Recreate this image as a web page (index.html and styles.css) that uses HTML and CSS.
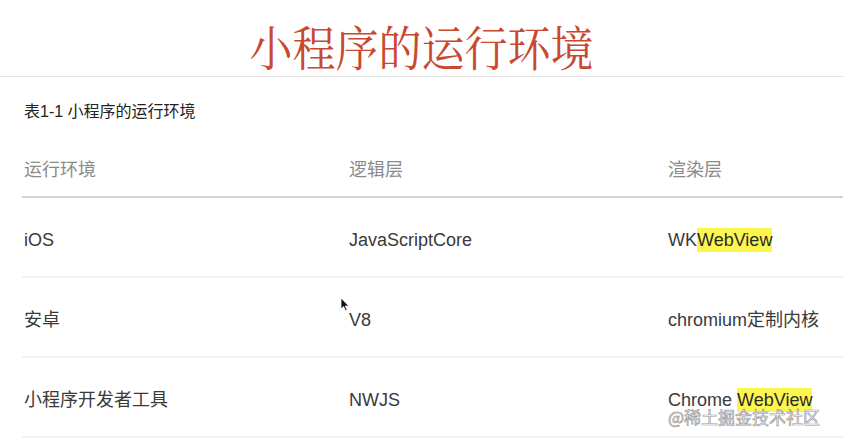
FILE: index.html
```html
<!DOCTYPE html>
<html lang="zh-CN">
<head>
  <meta charset="UTF-8">
  <title>小程序的运行环境</title>
  <link rel="stylesheet" href="styles.css">
</head>
<body>

  <!-- Slide title -->
  <header class="slide-title">
    <h1>小程序的运行环境</h1>
  </header>

  <!-- Table section -->
  <section class="env">
    <p class="caption">表1-1 小程序的运行环境</p>
    <table class="env-table">
      <colgroup>
        <col class="col-a">
        <col class="col-b">
        <col>
      </colgroup>
      <thead>
        <tr>
          <th>运行环境</th>
          <th>逻辑层</th>
          <th>渲染层</th>
        </tr>
      </thead>
      <tbody>
        <tr>
          <td>iOS</td>
          <td>JavaScriptCore</td>
          <td>WK<mark>WebView</mark></td>
        </tr>
        <tr>
          <td>安卓</td>
          <td>V8</td>
          <td>chromium定制内核</td>
        </tr>
        <tr>
          <td>小程序开发者工具</td>
          <td>NWJS</td>
          <td>Chrome <mark>WebView</mark></td>
        </tr>
      </tbody>
    </table>

    <!-- mouse pointer captured in the screenshot -->
    <svg class="cursor" width="10" height="15" viewBox="0 0 10 15">
      <path d="M1 1 L1 12 L3.6 9.6 L5.6 14 L7.2 13.3 L5.3 9 L8.8 9 Z" fill="#111" stroke="#fff" stroke-width="0.8"/>
    </svg>

    <span class="watermark">@稀土掘金技术社区</span>
  </section>

</body>
</html>
```

FILE: styles.css
```css
body {
  margin: 0;
  padding: 0;
  background: #fff;
  color: #333;
  font-family: "Liberation Sans", "Noto Sans CJK SC", sans-serif;
}

/* Title */
.slide-title {
  height: 76px;
  border-bottom: 1px solid #e4e4e4;
  text-align: center;
}

.slide-title h1 {
  margin: 0;
  padding-top: 18px;
  font-family: "Noto Serif CJK SC", "Noto Sans CJK SC", serif;
  font-size: 43px;
  font-weight: normal;
  line-height: 54px;
  color: #c9482f;
  transform: scaleY(1.1);
}

/* Table */
.env {
  position: relative;
  padding-left: 22px;
}

.caption {
  margin: 0;
  padding: 24px 0 0 2px;
  font-size: 16px;
  line-height: 22px;
  color: #222;
}

.env-table {
  width: 100%;
  margin-top: 20px;
  border-collapse: collapse;
  font-size: 18px;
  line-height: 24px;
}

.col-a {
  width: 325px;
}

.col-b {
  width: 319px;
}

.env-table th {
  height: 53px;
  padding: 0 0 0 2px;
  text-align: left;
  vertical-align: middle;
  font-weight: normal;
  color: #8a8a8a;
  border-bottom: 2px solid #d4d4d4;
}

.env-table td {
  height: 80px;
  padding: 6px 0 0 2px;
  vertical-align: middle;
  color: #3a3a3a;
  border-bottom: 2px solid #f2f2f2;
  box-sizing: border-box;
}

.env-table mark {
  background: #fbf550;
  color: #2a2a2a;
  padding: 2px 0;
}

.cursor {
  position: absolute;
  left: 340px;
  top: 220px;
}

.watermark {
  position: absolute;
  left: 668px;
  top: 330px;
  font-family: "Noto Sans CJK SC", sans-serif;
  font-size: 17px;
  line-height: 20px;
  color: #fff;
  -webkit-text-stroke: 0.7px #999;
}
```
